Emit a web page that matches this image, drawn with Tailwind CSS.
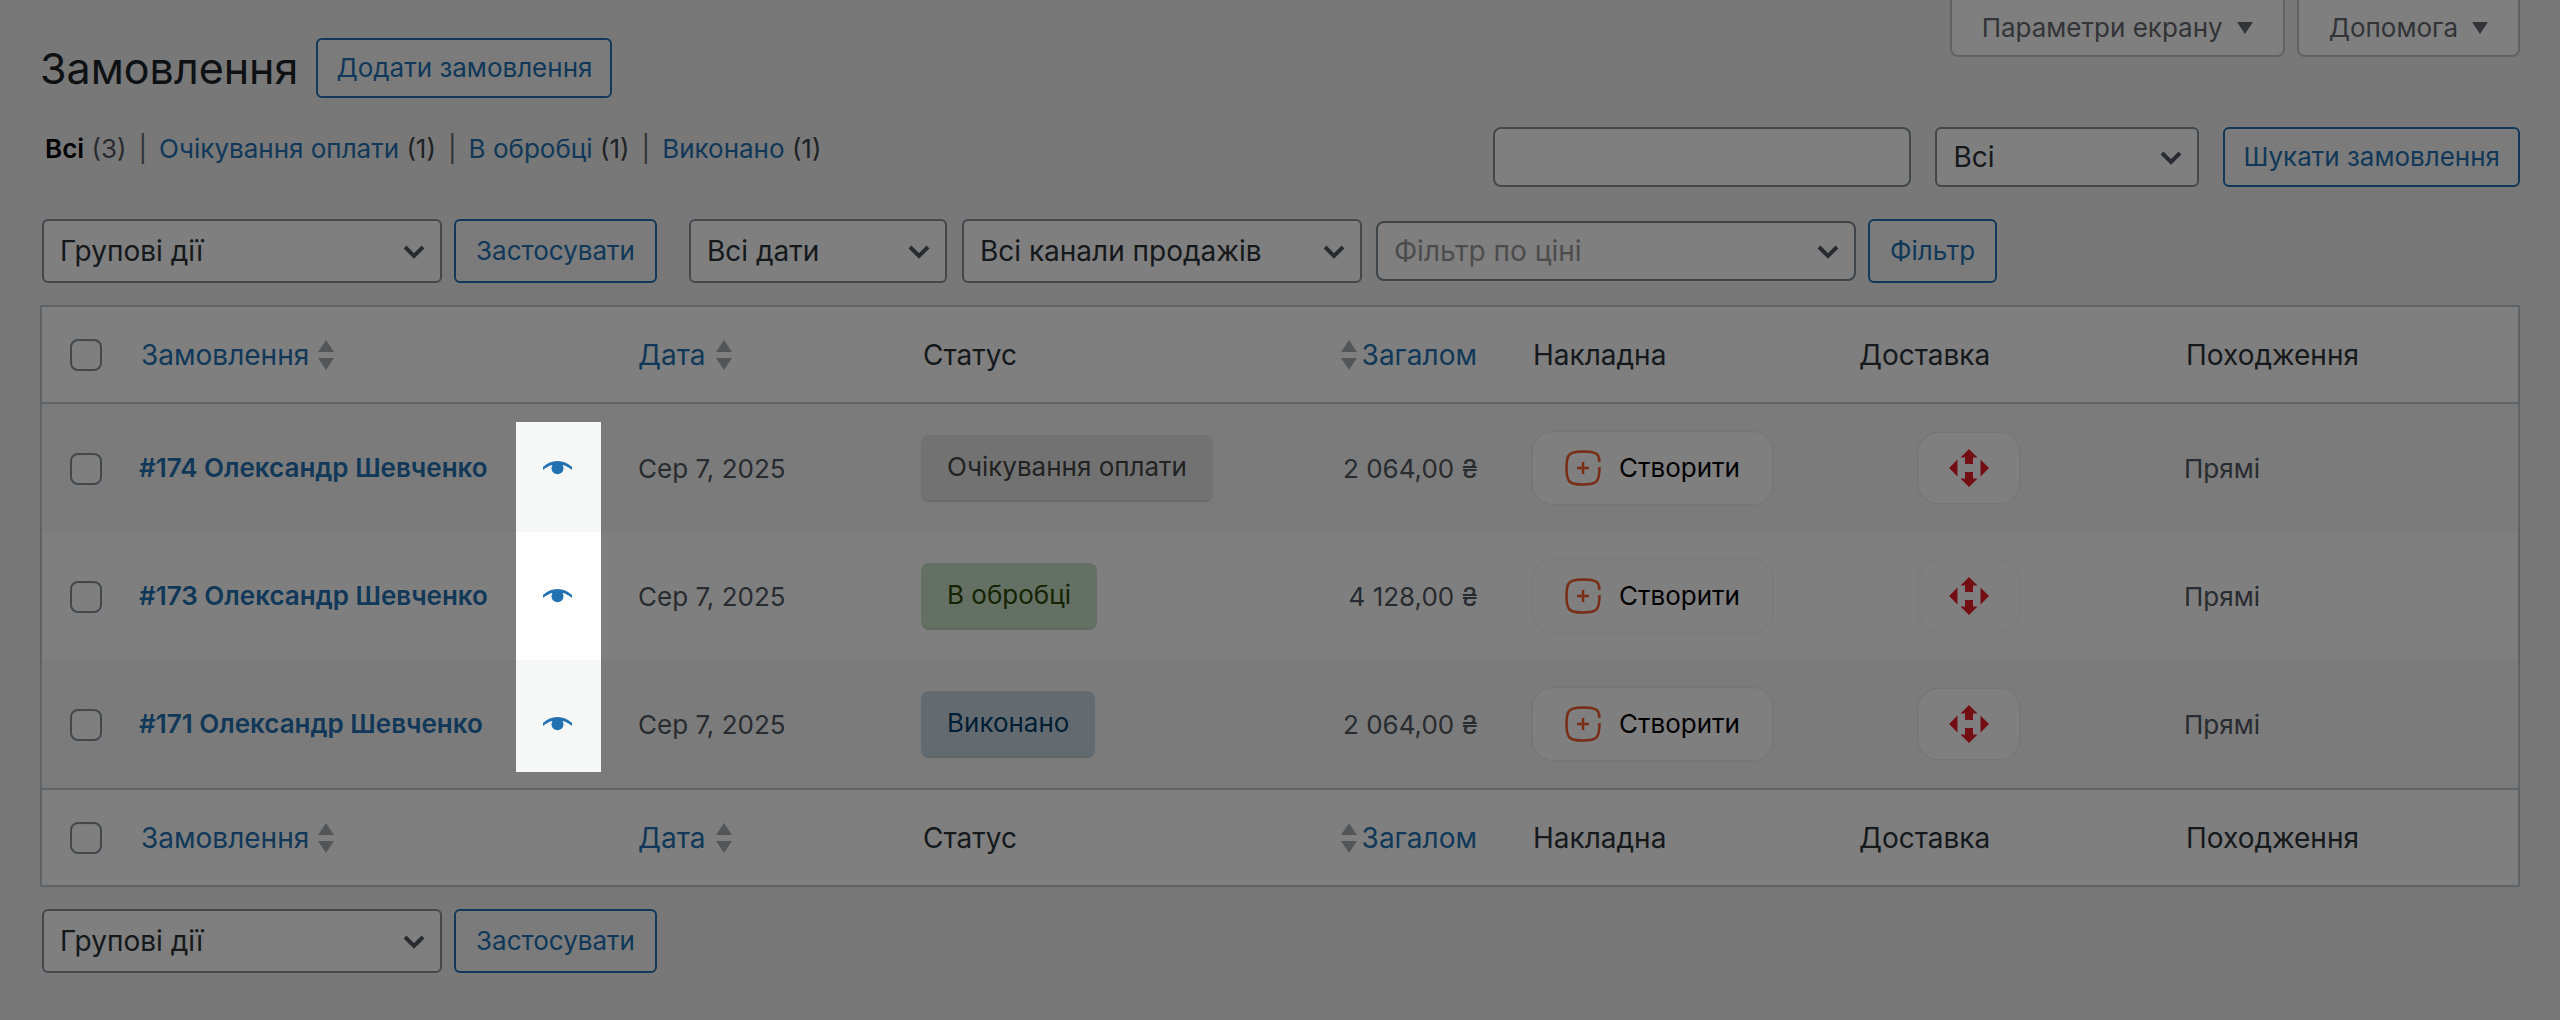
<!DOCTYPE html>
<html lang="uk">
<head>
    <meta charset="UTF-8">
    <meta name="viewport" content="width=device-width, initial-scale=1.0">
    <title>Замовлення</title>
    <script src="https://cdn.jsdelivr.net/npm/@tailwindcss/browser@4"></script>
</head>
<body class="min-h-screen bg-[#f0f0f1] font-['Inter',sans-serif] text-[26px] leading-9 text-[#3c434a]">
    <!-- Icons -->
    <svg class="hidden" aria-hidden="true">
        <symbol id="chevron" viewBox="0 0 24 24"><path d="M3 8l9 9 9-9" fill="none" stroke="#50575e" stroke-width="4"/></symbol>
        <symbol id="sort" viewBox="0 0 18 30"><path d="M9 0l8 12H1zM9 30l8-12H1z" fill="#a7aaad"/></symbol>
        <symbol id="eye" viewBox="0 0 29 14"><path d="M0 6C4 2 9 0 14.500 0S25 2 29 6V9C26 6.500 23 5 20 4L14.500 6 9 4C6 5 3 6.500 0 9z"/><circle cx="14.500" cy="7.200" r="6"/></symbol>
        <symbol id="create" viewBox="0 0 36 36"><path d="M34.500 12C34.200 4 32 1.500 18 1.500S1.500 4 1.500 18 4 34.500 18 34.500 34.500 32 34.500 17M18 12v12M12 18h12" fill="none" stroke="currentColor" stroke-width="2.500"/></symbol>
        <symbol id="nova" viewBox="0 0 40 38"><path d="M20 0l8.500 8.500H24V15h-8V8.500h-4.500zM20 38l8.500-8.500H24V23h-8v6.500h-4.500zM0 19l8.500-8.500v17zM40 19l-8.500-8.500v17z"/></symbol>
    </svg>

    <div class="px-10">
        <header class="flex items-start justify-between">
            <div class="flex items-center gap-[18px] pt-[38px]">
                <h1 class="text-[43px] leading-[60px] text-[#1d2327]">Замовлення</h1>
                <a href="#" class="flex h-[60px] items-center rounded-md border-2 border-[#2271b1] bg-[#f6f7f7] px-[18px] text-[#2271b1]">Додати замовлення</a>
            </div>
            <div class="flex gap-3 text-[#646970]">
                <button type="button" class="flex h-[57px] items-center gap-[14px] rounded-b-lg border-2 border-t-0 border-[#c3c4c7] bg-white px-[30px]">Параметри екрану
                    <svg class="h-3 w-4" viewBox="0 0 16 12"><path d="M0 0h16L8 12z" fill="#646970"/></svg></button>
                <button type="button" class="flex h-[57px] items-center gap-[14px] rounded-b-lg border-2 border-t-0 border-[#c3c4c7] bg-white px-[30px]">Допомога
                    <svg class="h-3 w-4" viewBox="0 0 16 12"><path d="M0 0h16L8 12z" fill="#646970"/></svg></button>
            </div>
        </header>

        <div class="flex items-start justify-between pt-[29px]">
            <ul class="flex gap-3 pt-1 pl-[5px]">
                <li><a href="#" class="font-semibold text-black">Всі</a> <span class="text-[#50575e]">(3)</span></li>
                <li class="text-[#646970]">|</li>
                <li><a href="#" class="text-[#2271b1]">Очікування оплати</a> (1)</li>
                <li class="text-[#646970]">|</li>
                <li><a href="#" class="text-[#2271b1]">В обробці</a> (1)</li>
                <li class="text-[#646970]">|</li>
                <li><a href="#" class="text-[#2271b1]">Виконано</a> (1)</li>
            </ul>
            <form class="flex gap-6">
                <input type="search" aria-label="Шукати замовлення" class="h-[60px] w-[418px] rounded-lg border-2 border-[#8c8f94] bg-white px-4">
                <div class="relative">
                    <select aria-label="Поле пошуку" class="h-[60px] w-[264px] appearance-none rounded-md border-2 border-[#8c8f94] bg-white px-4 text-[28px] text-[#2c3338]"><option>Всі</option></select>
                    <svg class="pointer-events-none absolute top-[18px] right-4 size-6"><use href="#chevron"/></svg>
                </div>
                <button type="button" class="h-[60px] rounded-md border-2 border-[#2271b1] bg-[#f6f7f7] px-[18px] text-[#2271b1]">Шукати замовлення</button>
            </form>
        </div>

        <div class="mt-8 flex items-center pl-[2px]">
            <div class="relative">
                <select aria-label="Групові дії" class="h-16 w-[400px] appearance-none rounded-md border-2 border-[#8c8f94] bg-white px-4 text-[28px] text-[#2c3338]"><option>Групові дії</option></select>
                <svg class="pointer-events-none absolute top-5 right-4 size-6"><use href="#chevron"/></svg>
            </div>
            <button type="button" class="ml-3 h-16 rounded-md border-2 border-[#2271b1] bg-[#f6f7f7] px-5 text-[#2271b1]">Застосувати</button>
            <div class="relative ml-8">
                <select aria-label="Фільтр за датою" class="h-16 w-[258px] appearance-none rounded-md border-2 border-[#8c8f94] bg-white px-4 text-[28px] text-[#2c3338]"><option>Всі дати</option></select>
                <svg class="pointer-events-none absolute top-5 right-4 size-6"><use href="#chevron"/></svg>
            </div>
            <div class="relative ml-[15px]">
                <select aria-label="Канал продажів" class="h-16 w-[400px] appearance-none rounded-md border-2 border-[#8c8f94] bg-white px-4 text-[28px] text-[#2c3338]"><option>Всі канали продажів</option></select>
                <svg class="pointer-events-none absolute top-5 right-4 size-6"><use href="#chevron"/></svg>
            </div>
            <div class="relative ml-[14px]">
                <select aria-label="Фільтр по ціні" class="h-[60px] w-[480px] appearance-none rounded-lg border-2 border-[#7e8993] bg-white px-4 text-[28px] text-[#999999]"><option>Фільтр по ціні</option></select>
                <svg class="pointer-events-none absolute top-[18px] right-4 size-6"><use href="#chevron"/></svg>
            </div>
            <button type="button" class="ml-3 h-16 rounded-md border-2 border-[#2271b1] bg-[#f6f7f7] px-5 text-[#2271b1]">Фільтр</button>
        </div>

        <table class="mt-[22px] w-full table-fixed border-separate border-spacing-0 border-2 border-[#c3c4c7] bg-white text-left shadow-xs">
            <colgroup>
                <col class="w-[79px]"><col class="w-[497px]"><col class="w-[285px]"><col class="w-[300px]"><col class="w-[310px]"><col class="w-[326px]"><col class="w-[327px]"><col class="w-[352px]">
            </colgroup>
            <thead class="text-[28px] text-[#2c3338]">
                <tr class="h-[97px]">
                    <th class="border-b-2 border-[#c3c4c7] pl-7"><input type="checkbox" aria-label="Вибрати всі" class="block size-8 appearance-none rounded-lg border-2 border-[#8c8f94] bg-white inset-shadow-xs"></th>
                    <th class="border-b-2 border-[#c3c4c7] px-5 font-normal"><a href="#" class="flex items-center gap-2 text-[#2271b1]">Замовлення <svg class="h-[30px] w-[18px]"><use href="#sort"/></svg></a></th>
                    <th class="border-b-2 border-[#c3c4c7] px-5 font-normal"><a href="#" class="flex items-center gap-[10px] text-[#2271b1]">Дата <svg class="h-[30px] w-[18px]"><use href="#sort"/></svg></a></th>
                    <th class="border-b-2 border-[#c3c4c7] px-5 font-normal">Статус</th>
                    <th class="border-b-2 border-[#c3c4c7] pr-9 font-normal"><a href="#" class="flex items-center justify-end gap-1 text-[#2271b1]"><svg class="h-[30px] w-[18px]"><use href="#sort"/></svg> Загалом</a></th>
                    <th class="border-b-2 border-[#c3c4c7] px-5 font-normal">Накладна</th>
                    <th class="border-b-2 border-[#c3c4c7] px-5 font-normal">Доставка</th>
                    <th class="border-b-2 border-[#c3c4c7] px-5 font-normal">Походження</th>
                </tr>
            </thead>
            <tbody class="text-[#50575e]">
                <tr class="h-32 bg-[#f6f7f7]">
                    <td class="pt-[2px] pl-7"><input type="checkbox" aria-label="Вибрати #174" class="block size-8 appearance-none rounded-lg border-2 border-[#8c8f94] bg-white inset-shadow-xs"></td>
                    <td class="relative pr-[46px] pl-[18px]">
                        <div class="flex items-center justify-between text-[#2271b1]">
                            <a href="#" class="font-semibold">#174 Олександр Шевченко</a>
                            <button type="button" aria-label="Переглянути"><svg class="h-[14px] w-[29px] fill-current"><use href="#eye"/></svg></button>
                        </div>
                        <!-- Highlight over the preview buttons, dims the rest of the page -->
                        <div class="pointer-events-none absolute top-[18px] right-[17px] z-10 h-[350px] w-[85px] shadow-[0_0_0_3000px_rgb(0_0_0/0.5)]"></div>
                    </td>
                    <td class="px-5 pt-[2px]">Сер 7, 2025</td>
                    <td class="px-[18px]"><span class="inline-flex h-[67px] items-center rounded-lg border-b-2 border-black/5 bg-[#e5e5e5] px-[26px] whitespace-nowrap text-[#454545]">Очікування оплати</span></td>
                    <td class="pt-[2px] pr-[35px] text-right">2 064,00 ₴</td>
                    <td class="px-5"><button type="button" class="flex h-[72px] items-center gap-[18px] rounded-[20px] bg-white px-8 text-black ring-2 ring-black/3"><svg class="size-9 text-[#f05a28]"><use href="#create"/></svg>Створити</button></td>
                    <td class="pl-20"><button type="button" aria-label="Нова пошта" class="flex h-[70px] w-[100px] items-center justify-center rounded-[20px] bg-white ring-2 ring-black/3"><svg class="h-[38px] w-10 fill-[#e81c2a]"><use href="#nova"/></svg></button></td>
                    <td class="px-[18px] pt-[2px]">Прямі</td>
                </tr>
                <tr class="h-32">
                    <td class="pt-[2px] pl-7"><input type="checkbox" aria-label="Вибрати #173" class="block size-8 appearance-none rounded-lg border-2 border-[#8c8f94] bg-white inset-shadow-xs"></td>
                    <td class="pr-[46px] pl-[18px]">
                        <div class="flex items-center justify-between text-[#2271b1]">
                            <a href="#" class="font-semibold">#173 Олександр Шевченко</a>
                            <button type="button" aria-label="Переглянути"><svg class="h-[14px] w-[29px] fill-current"><use href="#eye"/></svg></button>
                        </div>
                    </td>
                    <td class="px-5 pt-[2px]">Сер 7, 2025</td>
                    <td class="px-[18px]"><span class="inline-flex h-[67px] items-center rounded-lg border-b-2 border-black/5 bg-[#c6e1c6] px-[26px] whitespace-nowrap text-[#2c4700]">В обробці</span></td>
                    <td class="pt-[2px] pr-[35px] text-right">4 128,00 ₴</td>
                    <td class="px-5"><button type="button" class="flex h-[72px] items-center gap-[18px] rounded-[20px] bg-white px-8 text-black ring-2 ring-black/3"><svg class="size-9 text-[#f05a28]"><use href="#create"/></svg>Створити</button></td>
                    <td class="pl-20"><button type="button" aria-label="Нова пошта" class="flex h-[70px] w-[100px] items-center justify-center rounded-[20px] bg-white ring-2 ring-black/3"><svg class="h-[38px] w-10 fill-[#e81c2a]"><use href="#nova"/></svg></button></td>
                    <td class="px-[18px] pt-[2px]">Прямі</td>
                </tr>
                <tr class="h-32 bg-[#f6f7f7]">
                    <td class="pt-[2px] pl-7"><input type="checkbox" aria-label="Вибрати #171" class="block size-8 appearance-none rounded-lg border-2 border-[#8c8f94] bg-white inset-shadow-xs"></td>
                    <td class="pr-[46px] pl-[18px]">
                        <div class="flex items-center justify-between text-[#2271b1]">
                            <a href="#" class="font-semibold">#171 Олександр Шевченко</a>
                            <button type="button" aria-label="Переглянути"><svg class="h-[14px] w-[29px] fill-current"><use href="#eye"/></svg></button>
                        </div>
                    </td>
                    <td class="px-5 pt-[2px]">Сер 7, 2025</td>
                    <td class="px-[18px]"><span class="inline-flex h-[67px] items-center rounded-lg border-b-2 border-black/5 bg-[#c8d7e1] px-[26px] whitespace-nowrap text-[#003d66]">Виконано</span></td>
                    <td class="pt-[2px] pr-[35px] text-right">2 064,00 ₴</td>
                    <td class="px-5"><button type="button" class="flex h-[72px] items-center gap-[18px] rounded-[20px] bg-white px-8 text-black ring-2 ring-black/3"><svg class="size-9 text-[#f05a28]"><use href="#create"/></svg>Створити</button></td>
                    <td class="pl-20"><button type="button" aria-label="Нова пошта" class="flex h-[70px] w-[100px] items-center justify-center rounded-[20px] bg-white ring-2 ring-black/3"><svg class="h-[38px] w-10 fill-[#e81c2a]"><use href="#nova"/></svg></button></td>
                    <td class="px-[18px] pt-[2px]">Прямі</td>
                </tr>
            </tbody>
            <tfoot class="text-[28px] text-[#2c3338]">
                <tr class="h-[97px]">
                    <th class="border-t-2 border-[#c3c4c7] pl-7"><input type="checkbox" aria-label="Вибрати всі" class="block size-8 appearance-none rounded-lg border-2 border-[#8c8f94] bg-white inset-shadow-xs"></th>
                    <th class="border-t-2 border-[#c3c4c7] px-5 font-normal"><a href="#" class="flex items-center gap-2 text-[#2271b1]">Замовлення <svg class="h-[30px] w-[18px]"><use href="#sort"/></svg></a></th>
                    <th class="border-t-2 border-[#c3c4c7] px-5 font-normal"><a href="#" class="flex items-center gap-[10px] text-[#2271b1]">Дата <svg class="h-[30px] w-[18px]"><use href="#sort"/></svg></a></th>
                    <th class="border-t-2 border-[#c3c4c7] px-5 font-normal">Статус</th>
                    <th class="border-t-2 border-[#c3c4c7] pr-9 font-normal"><a href="#" class="flex items-center justify-end gap-1 text-[#2271b1]"><svg class="h-[30px] w-[18px]"><use href="#sort"/></svg> Загалом</a></th>
                    <th class="border-t-2 border-[#c3c4c7] px-5 font-normal">Накладна</th>
                    <th class="border-t-2 border-[#c3c4c7] px-5 font-normal">Доставка</th>
                    <th class="border-t-2 border-[#c3c4c7] px-5 font-normal">Походження</th>
                </tr>
            </tfoot>
        </table>

        <div class="flex pt-[22px] pb-11 pl-[2px]">
            <div class="relative">
                <select aria-label="Групові дії" class="h-16 w-[400px] appearance-none rounded-md border-2 border-[#8c8f94] bg-white px-4 text-[28px] text-[#2c3338]"><option>Групові дії</option></select>
                <svg class="pointer-events-none absolute top-5 right-4 size-6"><use href="#chevron"/></svg>
            </div>
            <button type="button" class="ml-3 h-16 rounded-md border-2 border-[#2271b1] bg-[#f6f7f7] px-5 text-[#2271b1]">Застосувати</button>
        </div>
    </div>
</body>
</html>
